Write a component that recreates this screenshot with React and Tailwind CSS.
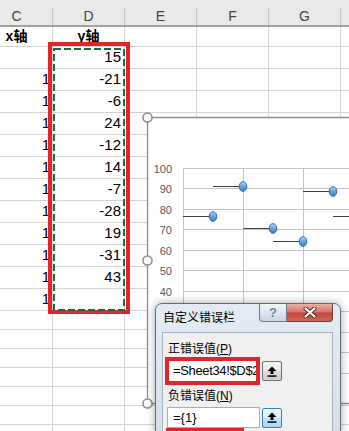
import React from "react";

const FONT = "font-['Liberation_Sans','Noto_Sans_CJK_SC',sans-serif]";

const yValues = ["15", "-21", "-6", "24", "-12", "14", "-7", "-28", "19", "-31", "43", ""];

// chart points, chart-relative coords (x, y)
const points = [
  [66, 99.5],
  [96, 69.5],
  [126, 111.5],
  [156, 124.5],
  [186, 74.5],
  [216, 99.5],
];
const gridY = [51.5, 71.5, 92.5, 112.5, 133.5, 153.5, 174.5, 194.5, 215.5, 235.5, 256.5];
// only the labels above the dialog are visible
const labels = ["100", "90", "80", "70", "60", "50", "40"];

function Cell({ className = "", children }) {
  return (
    <div className={`flex w-[72px] shrink-0 items-center border-r border-[#d4d4d4] ${className}`}>
      {children}
    </div>
  );
}

function Row({ h, children }) {
  return <div className={`flex border-b border-[#d4d4d4] ${h}`}>{children}</div>;
}

function EmptyCells({ n }) {
  return Array.from({ length: n }).map((_, i) => <Cell key={i} />);
}

function Chart() {
  return (
    <div className="absolute left-[147px] top-[117px] h-[287px] w-[210px] bg-white">
      <svg width="210" height="287" viewBox="0 0 210 287" className="overflow-visible">
        <defs>
          <linearGradient id="mk" x1="0" y1="0" x2="0" y2="1">
            <stop offset="0" stopColor="#b4d5f3" />
            <stop offset="0.55" stopColor="#5f9fdc" />
            <stop offset="1" stopColor="#3f82c8" />
          </linearGradient>
        </defs>
        {/* gridlines */}
        {gridY.map((y) => (
          <line key={`h${y}`} x1="36" x2="210" y1={y} y2={y} stroke="#c4c4c4" strokeWidth="1" />
        ))}
        {[36.5, 96.5, 156.5, 216.5].map((x) => (
          <line key={`v${x}`} x1={x} x2={x} y1="51" y2="257" stroke="#c4c4c4" strokeWidth="1" />
        ))}
        {/* axis labels */}
        {labels.map((t, i) => (
          <text
            key={t}
            x="25"
            y={gridY[i] + 4}
            textAnchor="end"
            fontSize="11"
            fill="#595959"
            fontFamily="Liberation Sans, sans-serif"
          >
            {t}
          </text>
        ))}
        {/* error bars */}
        {points.map(([x, y]) => (
          <line key={`e${x}`} x1={x - 30} x2={x} y1={y} y2={y} stroke="#3f3f3f" strokeWidth="1" />
        ))}
        {/* markers */}
        {points.map(([x, y]) => (
          <ellipse key={`m${x}`} cx={x} cy={y} rx="3.8" ry="4.8" fill="url(#mk)" stroke="#2b69ab" strokeWidth="1" />
        ))}
        {/* frame + handles */}
        <path d="M0.5 0 V287 M0 0.5 H210 M0 286.5 H210" stroke="#8c8c8c" strokeWidth="1.3" fill="none" />
        {[0.5, 143.5, 286.5].map((y) => (
          <circle key={y} cx="0.5" cy={y} r="4.5" fill="white" stroke="#8a8a8a" strokeWidth="1.5" />
        ))}
      </svg>
    </div>
  );
}

function UpButton({ hot }) {
  return (
    <div
      className={`flex h-[20px] w-[20px] items-center justify-center rounded-[2px] border ${
        hot
          ? "border-[#3c7fb1] bg-[linear-gradient(#eaf6fd,#d9f0fc_50%,#bee6fd_51%,#a7d9f5)]"
          : "border-[#707070] bg-[linear-gradient(#f2f2f2,#ebebeb_50%,#dddddd_51%,#cfcfcf)]"
      }`}
    >
      <svg width="10" height="11" viewBox="0 0 10 11">
        <path d="M5 0.5 L9.5 5 H6.5 V8 H3.5 V5 H0.5 Z" fill="#000" />
        <rect x="0.5" y="9.3" width="9" height="1.5" fill="#000" />
      </svg>
    </div>
  );
}

function Dialog() {
  return (
    <div
      className={`absolute left-[155px] top-[303px] h-[150px] w-[186px] rounded-t-[7px] border border-[#5d6b7d] bg-[linear-gradient(#e4ebf4,#d5dfea)] shadow-[0_0_8px_rgba(0,0,0,0.35)] ${FONT}`}
    >
      <div className="flex h-[28px] items-start justify-between pl-[7px] pr-[7px]">
        <span className="pt-[8px] text-[12px] leading-none text-black">自定义错误栏</span>
        <div className="flex">
          <div className="flex h-[18px] w-[28px] items-center justify-center rounded-bl-[4px] border border-t-0 border-[#6c7a8b] bg-[linear-gradient(#f1f5fa,#dde5ee_50%,#cbd6e3)] text-[13px] font-bold leading-none text-[#7a8390]">
            ?
          </div>
          <div className="flex h-[18px] w-[46px] items-center justify-center rounded-br-[4px] border border-l-0 border-t-0 border-[#6b3c37] bg-[linear-gradient(#eab0a7,#d7796e_45%,#c4453a_55%,#d1685d)]">
            <svg width="14" height="11" viewBox="0 0 14 11">
              <path d="M2.5 1.5 L11.5 9.5 M11.5 1.5 L2.5 9.5" stroke="#4a2a27" strokeWidth="4" strokeLinecap="round" />
              <path d="M2.5 1.5 L11.5 9.5 M11.5 1.5 L2.5 9.5" stroke="#fff" strokeWidth="2.2" strokeLinecap="round" />
            </svg>
          </div>
        </div>
      </div>
      <div className="ml-[6px] mr-[7px] h-[140px] border border-[#a9b4c2] bg-[#f0f0f0] pt-[10px]">
        <div className="ml-[5px] text-[12px] leading-none text-black">
          正错误值(<span className="underline">P</span>)
        </div>
        <div className="mt-[2px] ml-[2px] flex items-center gap-[2px]">
          <div className="flex h-[28px] w-[95px] items-center overflow-hidden border-4 border-[#e2242c] bg-white pl-[4px]">
            <span className="whitespace-nowrap text-[13px] tracking-[-0.35px] text-black">=Sheet34!$D$2</span>
          </div>
          <UpButton />
        </div>
        <div className="mt-[5px] ml-[5px] text-[12px] leading-none text-black">
          负错误值(<span className="underline">N</span>)
        </div>
        <div className="mt-[5px] ml-[4px] flex items-center gap-[2px]">
          <div className="flex h-[21px] w-[93px] items-center border border-[#abadb3] bg-white pl-[5px]">
            <span className="text-[13px] text-black">={"{1}"}</span>
          </div>
          <UpButton hot />
        </div>
        <div className="ml-[3px] h-[30px] w-[78px] border-4 border-[#e2242c]" />
      </div>
    </div>
  );
}

export default function App() {
  return (
    <div className={`relative h-[431px] w-[349px] overflow-hidden bg-white ${FONT}`}>
      {/* spreadsheet grid */}
      <div className="-ml-[19px]">
        {/* column header */}
        <div className="flex h-[27px] border-b-2 border-[#a3a3a3] bg-[#e9e9e9] pt-[8px]">
          {["C", "D", "E", "F", "G", "H"].map((l) => (
            <div
              key={l}
              className="flex w-[72px] shrink-0 items-center justify-center border-r border-[#c6c6c6] text-[14px] text-[#444]"
            >
              {l === "H" ? "" : l}
            </div>
          ))}
        </div>

        {/* header labels */}
        <Row h="h-[20px]">
          <Cell className="justify-center text-[14px] font-bold text-black">x轴</Cell>
          <Cell className="justify-center text-[14px] font-bold text-black">y轴</Cell>
          <EmptyCells n={4} />
        </Row>

        {/* data rows */}
        {yValues.map((v, i) => (
          <Row key={i} h="h-[22px]">
            <Cell className="justify-end pr-[2px] text-[15px] text-black">{i > 0 ? "1" : ""}</Cell>
            <Cell className="justify-end pr-[3px] text-[15px] text-black">{v}</Cell>
            <EmptyCells n={4} />
          </Row>
        ))}

        {/* empty rows */}
        {Array.from({ length: 7 }).map((_, i) => (
          <Row key={`r${i}`} h="h-[19px]">
            <EmptyCells n={6} />
          </Row>
        ))}
      </div>

      {/* copy selection + highlight */}
      <div className="absolute left-[48px] top-[42px] h-[272px] w-[82px] border-4 border-[#e2242c]" />
      <svg className="absolute left-[53px] top-[48px]" width="72" height="263">
        <rect x="1" y="1" width="70" height="261" fill="none" stroke="#1e6b3c" strokeWidth="2" strokeDasharray="7 3" />
      </svg>

      <Chart />
      <Dialog />
    </div>
  );
}
